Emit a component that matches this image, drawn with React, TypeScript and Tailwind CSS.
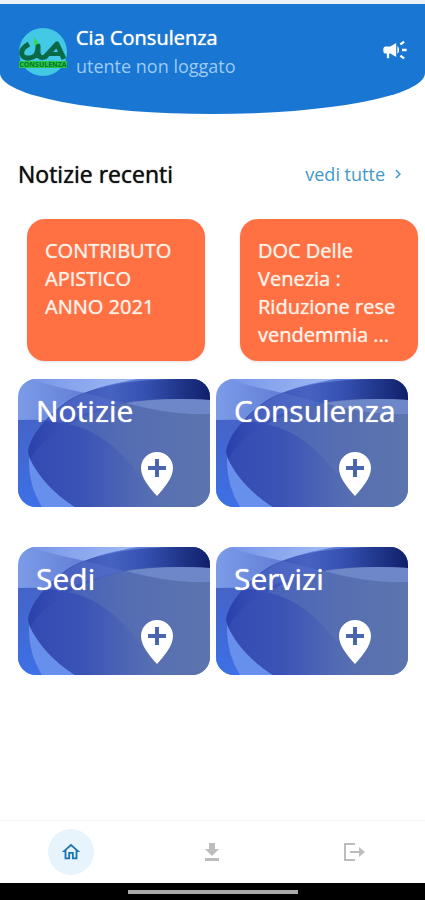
import React from "react";
import { MdCampaign, MdOutlineHome, MdChevronRight } from "react-icons/md";

const news = [
  { id: 1, title: "CONTRIBUTO APISTICO ANNO 2021" },
  { id: 2, title: "DOC Delle Venezia : Riduzione rese vendemmia ..." },
];

const sections = ["Notizie", "Consulenza", "Sedi", "Servizi"];

const Logo: React.FC = () => (
  <svg viewBox="0 0 50 50" className="size-[50px] shrink-0" aria-hidden="true">
    <circle cx="25" cy="25" r="24" fill="#43c8e6" />
    <rect x="1" y="34" width="48" height="7" fill="#25c93a" />
    {/* linked c, i and a strokes */}
    <g fill="none" stroke="#0a6a48" strokeWidth="5" strokeLinejoin="round">
      <path d="M11 17Q2 22 4 28Q7 33 15 30Q20 28 20 19V26Q21 32 27 30L39 17L46 32" />
      <path d="M30 27H44" strokeWidth="4" />
    </g>
    <path d="M16 10L21 16L16 19Z" fill="#35d957" />
    <text
      x="25"
      y="40"
      fontSize="7"
      fontWeight="700"
      textAnchor="middle"
      fontFamily="Open Sans, sans-serif"
      fill="#08703a"
    >
      CONSULENZA
    </text>
  </svg>
);

// Waves behind the title of each section tile
const Waves: React.FC<{ id: string }> = ({ id }) => (
  <svg
    viewBox="0 0 192 128"
    preserveAspectRatio="none"
    className="absolute inset-0 size-full"
    aria-hidden="true"
  >
    <defs>
      <linearGradient id={`${id}-base`} x1="0" y1="0" x2="1" y2="0">
        <stop offset="0" stopColor="#3b57ba" />
        <stop offset="0.3" stopColor="#4a65b9" />
        <stop offset="0.6" stopColor="#566eb2" />
        <stop offset="1" stopColor="#5c75ae" />
      </linearGradient>
      <linearGradient id={`${id}-top`} x1="0" y1="0" x2="1" y2="0">
        <stop offset="0" stopColor="#7c9ce8" />
        <stop offset="0.3" stopColor="#6482d8" />
        <stop offset="0.8" stopColor="#5377d8" />
      </linearGradient>
      <linearGradient id={`${id}-dark`} x1="0" y1="0" x2="1" y2="0">
        <stop offset="0" stopColor="#2a41ac" />
        <stop offset="0.25" stopColor="#3c55b8" />
        <stop offset="0.45" stopColor="#4763c2" />
        <stop offset="0.65" stopColor="#3450b0" />
        <stop offset="1" stopColor="#101f6a" />
      </linearGradient>
      <linearGradient id={`${id}-left`} x1="0" y1="0" x2="0" y2="1">
        <stop offset="0" stopColor="#4564c8" />
        <stop offset="1" stopColor="#3d70e6" />
      </linearGradient>
      <linearGradient id={`${id}-inner`} x1="0" y1="0" x2="1" y2="0">
        <stop offset="0" stopColor="#344bb4" />
        <stop offset="0.4" stopColor="#3b52b6" />
        <stop offset="1" stopColor="#4a62b4" stopOpacity="0" />
      </linearGradient>
      <linearGradient id={`${id}-light`} x1="0" y1="0" x2="1" y2="0">
        <stop offset="0" stopColor="#7595e8" />
        <stop offset="1" stopColor="#a2bbf4" />
      </linearGradient>
    </defs>
    <rect width="192" height="128" fill={`url(#${id}-top)`} />
    <path d="M10 0H120Q84 6 67 14Q38 8 10 0Z" fill={`url(#${id}-light)`} />
    <path d="M0 41Q20 40 32 42V128H0Z" fill={`url(#${id}-left)`} />
    <path d="M11 78Q10 106 24 128H60Q28 110 11 78Z" fill="#6690ec" />
    <path
      d="M10 73C12 57 28 38 47 24C67 9 110 1 155 0H192V128H57C35 114 18 96 10 73Z"
      fill={`url(#${id}-base)`}
    />
    <path
      d="M12 80C16 64 28 55 43 44C75 48 100 66 128 104L140 128H57C36 115 20 97 12 80Z"
      fill={`url(#${id}-inner)`}
    />
    <path
      d="M10 73C12 57 28 38 47 24C67 9 110 1 155 0H192V21Q142 18 112 23C75 30 28 52 12 80Z"
      fill={`url(#${id}-dark)`}
    />
    {/* pale ribbon crossing the dark band */}
    <path
      d="M28 42C36 32 48 22 67 14Q88 19 106 24C82 29 60 36 43 44Q36 42 28 42Z"
      fill="#5872cc"
      opacity="0.5"
    />
    <path d="M108 24Q150 18 192 21V35C160 36 134 31 108 24Z" fill="#6e87c8" />
  </svg>
);

const PinPlus: React.FC = () => (
  <svg
    viewBox="0 0 32 44"
    className="absolute right-[37px] bottom-[11px] h-11 w-8"
    aria-hidden="true"
  >
    <path
      d="M16 0C7 0 0 7 0 16C0 26 9 36 16 44C23 36 32 26 32 16C32 7 25 0 16 0Z"
      fill="#fff"
    />
    <path d="M16 7V25M7 16H25" stroke="#4a67ae" strokeWidth="4" />
  </svg>
);

export default function App() {
  return (
    <div className="flex min-h-screen flex-col overflow-x-hidden bg-white font-['Open_Sans',sans-serif]">
      <div className="h-1 bg-[#e9f2f7]" />
      <header className="flex h-[110px] items-start justify-between rounded-b-[50%_41px] bg-[#1976d2] px-[18px] pt-5 text-white">
        <div className="flex items-center gap-2">
          <Logo />
          <div>
            <h1 className="text-xl leading-7 font-medium text-shadow-[0_0_1px_currentColor]">
              Cia Consulenza
            </h1>
            <p className="text-lg leading-7 text-[#9dcbf3]">utente non loggato</p>
          </div>
        </div>
        <button aria-label="Avvisi" className="mt-3 -mr-0.5">
          <MdCampaign className="size-7" />
        </button>
      </header>

      <main className="flex-1">
        {/* Recent news */}
        <div className="mt-11 flex items-center justify-between px-[18px]">
          <h2 className="text-[23px] leading-8 text-[#111] text-shadow-[0_0_1px_currentColor]">
            Notizie recenti
          </h2>
          <a href="#notizie" className="flex items-center gap-1 text-lg text-[#3f9ac9]">
            vedi tutte
            <MdChevronRight className="size-[18px]" />
          </a>
        </div>
        <div className="mt-[29px] flex gap-[35px] overflow-hidden px-[27px] pb-[18px]">
          {news.map((item) => (
            <article
              key={item.id}
              className="h-[142px] w-[178px] shrink-0 rounded-[18px] bg-[#ff7043] p-[18px] text-xl leading-7 text-[#fff1e6] shadow-sm text-shadow-[0_0_1px_currentColor]"
            >
              {item.title}
            </article>
          ))}
        </div>

        {/* Sections */}
        <div className="grid grid-cols-2 gap-x-1.5 gap-y-10 pr-[17px] pl-[18px]">
          {sections.map((name) => (
            <button
              key={name}
              className="relative flex h-32 items-start overflow-hidden rounded-[18px] pt-3 pl-[18px] text-left"
            >
              <Waves id={name} />
              <span className="relative text-[30px] leading-10 text-white text-shadow-[0_0_1px_currentColor]">
                {name}
              </span>
              <PinPlus />
            </button>
          ))}
        </div>
      </main>

      <nav className="grid h-[63px] grid-cols-3 place-items-center border-t border-[#f7f7f7] text-[#bdbdbd]">
        <button
          aria-label="Home"
          className="flex size-[46px] items-center justify-center rounded-full bg-[#e7f4fc] text-[#1c74b0]"
        >
          <MdOutlineHome className="size-[22px]" />
        </button>
        <button aria-label="Scarica">
          <svg viewBox="0 0 24 24" className="size-6" fill="currentColor">
            <path d="M5 21h14v-3H5v3zM19 9h-4V3H9v6H5l7 7z" />
          </svg>
        </button>
        <button aria-label="Esci">
          <svg viewBox="0 0 24 24" className="size-6" fill="none" stroke="currentColor" strokeWidth="2">
            <path d="M13 4H3V20H13M8 12H18" />
            <path d="M17 7L23 12L17 17Z" fill="currentColor" stroke="none" />
          </svg>
        </button>
      </nav>
      <div className="flex h-[17px] items-center justify-center bg-black">
        <div className="h-1 w-2/5 bg-[#aaa]" />
      </div>
    </div>
  );
}
